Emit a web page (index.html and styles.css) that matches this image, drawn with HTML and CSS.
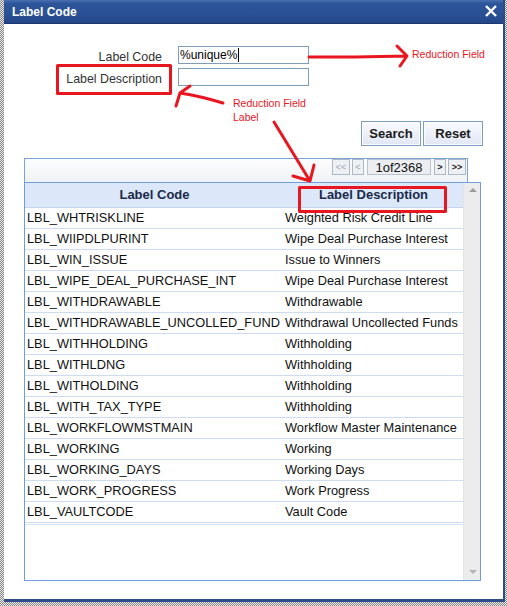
FILE: index.html
```html
<!doctype html>
<html lang="en">
<head>
    <meta charset="utf-8" />
    <title>Label Code</title>
    <link rel="stylesheet" href="styles.css">
</head>
<body>
    <div class="dialog">
        <div class="titlebar">
            <span class="title">Label Code</span>
            <svg class="close" width="12" height="12" viewBox="0 0 12 12"><path d="M1 1L11 11M11 1L1 11" stroke="#fff" stroke-width="2.4" /></svg>
        </div>

        <div class="content">
            <div class="form">
                <div class="field">
                    <label for="code">Label Code</label>
                    <div class="input"><span id="code">%unique%</span><span class="caret"></span></div>
                </div>
                <div class="field">
                    <label for="desc">Label Description</label>
                    <div class="input" id="desc"></div>
                </div>
            </div>

            <div class="actions">
                <button type="button">Search</button>
                <button type="button">Reset</button>
            </div>

            <div class="results">
                <div class="pager">
                    <span class="pbtn off">&lt;&lt;</span>
                    <span class="pbtn off narrow">&lt;</span>
                    <span class="page">1of2368</span>
                    <span class="pbtn narrow">&gt;</span>
                    <span class="pbtn">&gt;&gt;</span>
                </div>
                <div class="grid">
                    <div class="cols">
                        <div class="row head"><div class="c1">Label Code</div><div class="c2">Label Description</div></div>
                        <div class="row"><div class="c1">LBL_WHTRISKLINE</div><div class="c2">Weighted Risk Credit Line</div></div>
                        <div class="row"><div class="c1">LBL_WIIPDLPURINT</div><div class="c2">Wipe Deal Purchase Interest</div></div>
                        <div class="row"><div class="c1">LBL_WIN_ISSUE</div><div class="c2">Issue to Winners</div></div>
                        <div class="row"><div class="c1">LBL_WIPE_DEAL_PURCHASE_INT</div><div class="c2">Wipe Deal Purchase Interest</div></div>
                        <div class="row"><div class="c1">LBL_WITHDRAWABLE</div><div class="c2">Withdrawable</div></div>
                        <div class="row"><div class="c1">LBL_WITHDRAWABLE_UNCOLLED_FUND</div><div class="c2">Withdrawal Uncollected Funds</div></div>
                        <div class="row"><div class="c1">LBL_WITHHOLDING</div><div class="c2">Withholding</div></div>
                        <div class="row"><div class="c1">LBL_WITHLDNG</div><div class="c2">Withholding</div></div>
                        <div class="row"><div class="c1">LBL_WITHOLDING</div><div class="c2">Withholding</div></div>
                        <div class="row"><div class="c1">LBL_WITH_TAX_TYPE</div><div class="c2">Withholding</div></div>
                        <div class="row"><div class="c1">LBL_WORKFLOWMSTMAIN</div><div class="c2">Workflow Master Maintenance</div></div>
                        <div class="row"><div class="c1">LBL_WORKING</div><div class="c2">Working</div></div>
                        <div class="row"><div class="c1">LBL_WORKING_DAYS</div><div class="c2">Working Days</div></div>
                        <div class="row"><div class="c1">LBL_WORK_PROGRESS</div><div class="c2">Work Progress</div></div>
                        <div class="row"><div class="c1">LBL_VAULTCODE</div><div class="c2">Vault Code</div></div>
                        <div class="tail"></div>
                    </div>
                    <div class="scrollbar">
                        <span class="arrow up"></span>
                        <span class="arrow down"></span>
                    </div>
                </div>
            </div>
        </div>
    </div>

    <!-- red annotations drawn over the screenshot -->
    <svg class="notes" width="507" height="606" viewBox="0 0 507 606">
        <g fill="none" stroke="#e8171f" stroke-width="3" stroke-linecap="round" stroke-linejoin="round">
            <rect x="57.5" y="65.5" width="113" height="28" />
            <rect x="299.5" y="187.5" width="146" height="24" />
            <path d="M309 57L355 57L407 56M397 46L407 56L400 66" />
            <path d="M223 103Q200 96 180 93M190 86L180 93L176 106" />
            <path d="M274 122L310 181M293 176L310 181L314 165" />
        </g>
    </svg>
    <div class="note n1">Reduction Field</div>
    <div class="note n2">Reduction Field<br>Label</div>
</body>
</html>
```

FILE: styles.css
```css
html, body { margin:0; padding:0; }
body {
    position:relative; width:507px; height:606px; overflow:hidden;
    font-family:"Liberation Sans", Arial, sans-serif;
    background:repeating-conic-gradient(#8a8a8a 0% 25%, #e6e6e6 0% 50%) 0 0 / 2px 2px;
}

.dialog {
    margin-left:4px; width:499px; height:599px; background:#fff;
    border-right:2px solid #2d4c88; border-bottom:3px solid #2d4c88;
    display:flex; flex-direction:column;
}
.titlebar {
    height:23px; flex:none; display:flex; align-items:center; justify-content:space-between;
    padding:0 6px 0 8px; border-bottom:1px solid #1b3670;
    background:linear-gradient(#4a70b0, #2d559a 15%, #2a5196 60%, #234685);
}
.title { color:#fff; font-weight:bold; font-size:12px; }
.close { display:block; margin-top:-1px; }

.content { flex:1; display:flex; flex-direction:column; }

.form { margin-top:22px; display:flex; flex-direction:column; gap:4px; }
.field { display:flex; align-items:flex-start; gap:16px; height:18px; }
.field label { width:158px; text-align:right; font-size:12.4px; line-height:14px; padding-top:4px; color:#333; }
.input {
    width:131px; height:18px; box-sizing:border-box; border:1px solid #7f9db9;
    font-size:12px; line-height:16px; padding-left:1px; color:#000; display:flex; align-items:center;
}
.caret { display:inline-block; width:1px; height:14px; background:#000; margin-left:1px; }

.actions { display:flex; justify-content:flex-end; gap:2px; margin-top:35px; padding-right:20px; }
.actions button {
    width:60px; height:25px; padding:0; font-family:inherit; font-size:13px; font-weight:bold; color:#1a1a1a;
    border:1px solid #7e9cc4; box-shadow:inset 0 0 0 1px #fbfcff;
    background:linear-gradient(#f9faff, #e2e7f4);
}

.results { margin:12px 0 0 20px; }
.pager {
    width:444px; height:24px; box-sizing:border-box; border:1px solid #7ba3d9; border-bottom:0;
    background:linear-gradient(#fdfdfe, #f0f2f5);
    display:flex; justify-content:flex-end; align-items:flex-start; gap:2px; padding:0 1px 0 0;
}
.pbtn {
    height:16px; width:18px; box-sizing:border-box; border:1px solid #aab8ca; background:#eef1f4;
    font-size:9px; font-weight:bold; color:#222; text-align:center; line-height:14px;
}
.pbtn.narrow { width:12px; }
.pbtn.off { color:#b2b8c2; }
.page {
    width:64px; height:16px; box-sizing:border-box; border:1px solid #b8c3d0; background:#eceef1;
    font-size:13px; line-height:15px; text-align:center; color:#111; margin:0 1px;
}

.grid {
    width:457px; height:399px; box-sizing:border-box; border:1px solid #6d9eda;
    display:flex;
}
.cols { width:438px; }
.row { display:flex; height:20px; border-bottom:1px solid #cddcf1; font-size:12.8px; color:#111; line-height:20px; }
.row .c1 { width:259px; padding-left:2px; box-sizing:border-box; white-space:nowrap; }
.row .c2 { width:179px; padding-left:1px; box-sizing:border-box; white-space:nowrap; overflow:hidden; }
.row.head { height:24px; line-height:24px; background:#dce8f9; font-size:13px; font-weight:bold; color:#1a2a4a; border-bottom-color:#c3d4ec; }
.row.head .c1, .row.head .c2 { text-align:center; padding:0; }
.tail { height:1px; border-bottom:1px solid #d6e2f3; }

.scrollbar {
    width:17px; background:#ececec; border-left:1px solid #e4e4e4; position:relative;
}
.arrow { position:absolute; left:5px; width:0; height:0; border-left:4px solid transparent; border-right:4px solid transparent; }
.arrow.up { top:5px; border-bottom:4px solid #9d9d9d; }
.arrow.down { bottom:6px; border-top:4px solid #b5b5b5; }

.notes { position:absolute; left:0; top:0; pointer-events:none; }
.note { position:absolute; color:#e8171f; font-size:10.5px; line-height:14px; }
.n1 { left:412px; top:47px; }
.n2 { left:233px; top:96px; }
```
